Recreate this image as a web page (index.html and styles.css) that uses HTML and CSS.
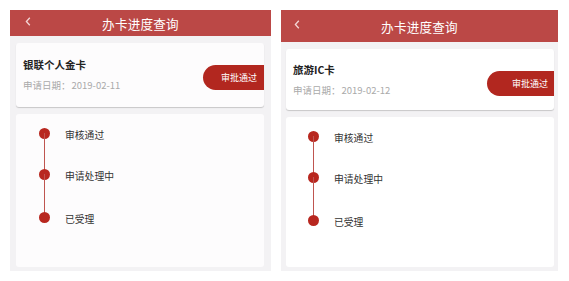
FILE: index.html
```html
<!DOCTYPE html>
<html lang="zh-CN">
<head>
    <meta charset="UTF-8">
    <meta name="viewport" content="width=device-width, initial-scale=1.0">
    <title>办卡进度查询</title>
    <link rel="stylesheet" href="styles.css">
</head>
<body>
    <div class="screens">
        <div class="phone phone-a">
            <div class="header">
                <span class="back"><svg width="6" height="9" viewBox="0 0 6 9"><path d="M4.8 0.8 L1.4 4.5 L4.8 8.2" fill="none" stroke="#f4d6d5" stroke-width="1.3"/></svg></span>
                <div class="title">办卡进度查询</div>
            </div>
            <div class="page">
                <div class="card summary">
                    <div class="info">
                        <div class="name">银联个人金卡</div>
                        <div class="date"><span class="label">申请日期：</span>2019-02-11</div>
                    </div>
                    <div class="status">审批通过</div>
                </div>
                <div class="card progress">
                    <div class="step"><span class="dot"></span><span class="text">审核通过</span></div>
                    <div class="step"><span class="dot"></span><span class="text">申请处理中</span></div>
                    <div class="step"><span class="dot"></span><span class="text">已受理</span></div>
                </div>
            </div>
        </div>
        <div class="phone phone-b">
            <div class="header">
                <span class="back"><svg width="6" height="9" viewBox="0 0 6 9"><path d="M4.8 0.8 L1.4 4.5 L4.8 8.2" fill="none" stroke="#f4d6d5" stroke-width="1.3"/></svg></span>
                <div class="title">办卡进度查询</div>
            </div>
            <div class="page">
                <div class="card summary">
                    <div class="info">
                        <div class="name">旅游IC卡</div>
                        <div class="date"><span class="label">申请日期：</span>2019-02-12</div>
                    </div>
                    <div class="status">审批通过</div>
                </div>
                <div class="card progress">
                    <div class="step"><span class="dot"></span><span class="text">审核通过</span></div>
                    <div class="step"><span class="dot"></span><span class="text">申请处理中</span></div>
                    <div class="step"><span class="dot"></span><span class="text">已受理</span></div>
                </div>
            </div>
        </div>
    </div>
</body>
</html>
```

FILE: styles.css
```css
body {
    margin: 0;
    background: #ffffff;
    font-family: "Noto Sans CJK SC", "Liberation Sans", sans-serif;
    color: #333;
}
.screens {
    display: flex;
    padding: 10px 0 0 10px;
}
.phone {
    height: 261px;
    display: flex;
    flex-direction: column;
    background: #f3f2f4;
}
.phone-a {
    width: 261px;
}
.phone-b {
    width: 277px;
    margin-left: 10px;
}
.header {
    position: relative;
    background: #bb4846;
    display: flex;
    align-items: center;
    justify-content: center;
    color: #fff;
}
.phone-a .header {
    height: 26px;
}
.phone-b .header {
    height: 32px;
}
.back {
    position: absolute;
    top: 50%;
    margin-top: -6px;
    line-height: 0;
}
.phone-a .back {
    left: 15px;
}
.phone-b .back {
    left: 13px;
}
.title {
    font-size: 12.6px;
    letter-spacing: 0.2px;
}
.page {
    flex: 1;
    display: flex;
    flex-direction: column;
    gap: 7px;
    padding: 7px 7px 4px 6px;
}
.phone-b .page {
    padding: 7px 4px 4px 5px;
}
.card {
    background: #fdfcfd;
    border-radius: 3px;
}
.phone-b .card {
    background: #ffffff;
}
.summary {
    display: flex;
    align-items: center;
    justify-content: space-between;
    box-shadow: 0 1px 1px rgba(0, 0, 0, 0.18);
}
.phone-a .summary {
    height: 64px;
}
.phone-b .summary {
    height: 61px;
}
.info {
    padding-left: 7px;
}
.name {
    font-size: 10.5px;
    font-weight: bold;
    color: #222;
    line-height: 14px;
}
.date {
    font-size: 9.5px;
    color: #aaa;
    line-height: 13px;
    margin-top: 7px;
}
.label {
    margin-right: 1px;
}
.status {
    background: #b2271f;
    color: #fff;
    font-size: 9px;
    height: 25px;
    display: flex;
    align-items: center;
    border-radius: 13px 0 0 13px;
}
.phone-a .status {
    width: 61px;
    padding-left: 18px;
    box-sizing: border-box;
    margin-top: 4px;
}
.phone-b .status {
    width: 67px;
    padding-left: 25px;
    box-sizing: border-box;
    margin-top: 8px;
}
.progress {
    flex: 1;
    padding-top: 13px;
}
.step {
    position: relative;
    display: flex;
    align-items: center;
    height: 12px;
}
.step:first-child {
    margin-bottom: 29px;
}
.step:nth-child(2) {
    margin-bottom: 31px;
}
.dot {
    width: 11px;
    height: 11px;
    border-radius: 50%;
    background: #b8271f;
    flex: none;
}
.step:not(:last-child)::after {
    content: "";
    position: absolute;
    top: 6px;
    height: 42px;
    width: 1.5px;
    background: #bf5550;
}
.phone-a .dot {
    margin-left: 22.5px;
}
.phone-a .step:not(:last-child)::after {
    left: 27.5px;
}
.phone-b .dot {
    margin-left: 21.5px;
}
.phone-b .step:not(:last-child)::after {
    left: 26.5px;
}
.text {
    font-size: 9.8px;
    color: #333;
    margin-left: 15.5px;
    padding-top: 3px;
}
```
